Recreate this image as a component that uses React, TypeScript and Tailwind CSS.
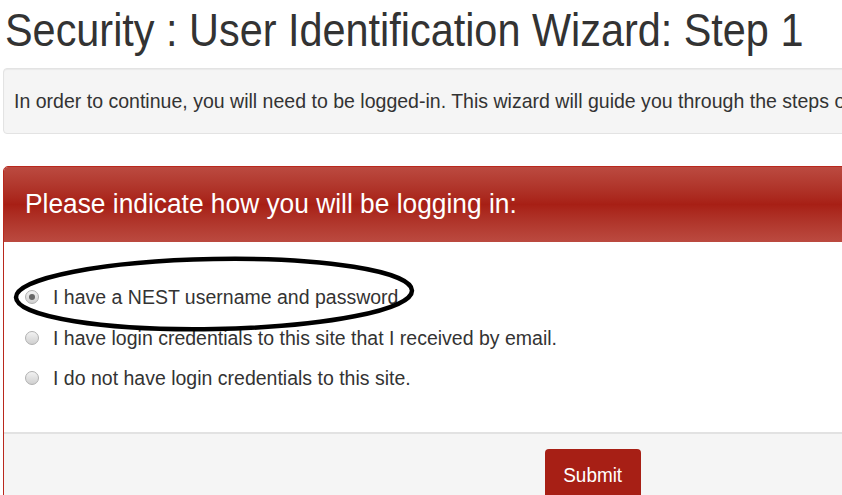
import React from 'react';

const font = { fontFamily: '"Liberation Sans", Arial, sans-serif' };

const options = [
  { label: 'I have a NEST username and password', checked: true },
  { label: 'I have login credentials to this site that I received by email.', checked: false },
  { label: 'I do not have login credentials to this site.', checked: false },
];

function Radio({ checked }: { checked: boolean }) {
  return (
    <span className="flex h-[14px] w-[14px] shrink-0 items-center justify-center rounded-full border border-[#b0b0b0] bg-gradient-to-b from-[#f2f2f2] to-[#d0d0d0]">
      {checked && <span className="h-[6px] w-[6px] rounded-full bg-[#666]" />}
    </span>
  );
}

export default function App() {
  return (
    <div className="relative h-[495px] w-[842px] overflow-hidden bg-white text-[#333]" style={font}>
      <h1 className="ml-[5px] origin-left scale-x-[0.9] whitespace-nowrap pt-[6px] text-[46px] leading-[48px] text-[#333]">
        Security : User Identification Wizard: Step 1
      </h1>

      {/* Intro well */}
      <div className="ml-[3px] mt-[14px] flex h-[66px] w-[900px] items-center rounded-[4px] border border-[#e3e3e3] bg-[#f5f5f5] pl-[10px] shadow-[inset_0_1px_1px_rgba(0,0,0,0.05)]">
        <p className="origin-left scale-x-[0.93] whitespace-nowrap text-[21px]">
          In order to continue, you will need to be logged-in. This wizard will guide you through the steps of identifying yourself.
        </p>
      </div>

      {/* Panel */}
      <div className="ml-[3px] mt-[32px] w-[900px] overflow-hidden rounded-t-[5px] border border-[#b9281d]">
        <div className="flex h-[75px] items-center bg-gradient-to-b from-[#bb4a40] via-[#a71f15] to-[#bb4a40] pl-[21px]">
          <h2 className="origin-left scale-x-[0.975] whitespace-nowrap text-[27px] text-white">
            Please indicate how you will be logging in:
          </h2>
        </div>

        <div className="flex h-[190px] flex-col gap-[18.5px] bg-white pl-[21px] pt-[44px] text-[20px]">
          {options.map((o) => (
            <label key={o.label} className="flex items-center gap-[14px] leading-[22px]">
              <Radio checked={o.checked} />
              <span className="origin-left scale-x-[0.975] whitespace-nowrap text-[#333]">{o.label}</span>
            </label>
          ))}
        </div>

        <div className="h-[80px] border-t-2 border-[#e2e2e2] bg-[#f5f5f5] pl-[541px] pt-[15px]">
          <button className="h-[54px] w-[96px] rounded-[4px] bg-[#a71f15] pb-[2px] text-[21px] text-white">
            <span className="inline-block scale-x-[0.9]">Submit</span>
          </button>
        </div>
      </div>

      {/* Hand-drawn annotation */}
      <svg className="pointer-events-none absolute left-0 top-0" width="842" height="495">
        <ellipse cx="214" cy="294" rx="198" ry="35" fill="none" stroke="#000" strokeWidth="4.5" transform="rotate(-1 214 294)" />
      </svg>
    </div>
  );
}
